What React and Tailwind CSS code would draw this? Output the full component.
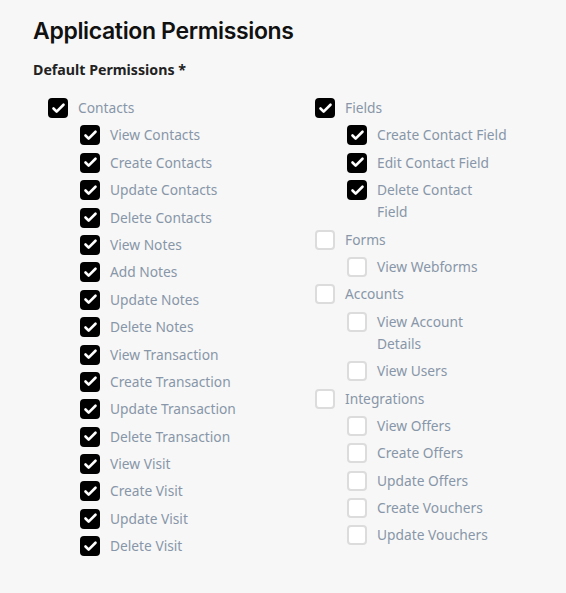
import { Check } from "lucide-react";

const left = {
  label: "Contacts",
  checked: true,
  children: [
    "View Contacts",
    "Create Contacts",
    "Update Contacts",
    "Delete Contacts",
    "View Notes",
    "Add Notes",
    "Update Notes",
    "Delete Notes",
    "View Transaction",
    "Create Transaction",
    "Update Transaction",
    "Delete Transaction",
    "View Visit",
    "Create Visit",
    "Update Visit",
    "Delete Visit",
  ],
};

// narrow: labels that wrap onto two lines in the right column
const right = [
  {
    label: "Fields",
    checked: true,
    children: ["Create Contact Field", "Edit Contact Field", { label: "Delete Contact Field", narrow: true }],
  },
  { label: "Forms", checked: false, children: ["View Webforms"] },
  {
    label: "Accounts",
    checked: false,
    children: [{ label: "View Account Details", narrow: true }, "View Users"],
  },
  {
    label: "Integrations",
    checked: false,
    children: ["View Offers", "Create Offers", "Update Offers", "Create Vouchers", "Update Vouchers"],
  },
];

const Box = ({ checked }) =>
  checked ? (
    <span className="mt-[1px] flex h-5 w-5 shrink-0 items-center justify-center rounded-[4px] bg-black">
      <Check size={15} strokeWidth={4.2} className="text-white" />
    </span>
  ) : (
    <span className="mt-[1px] h-5 w-5 shrink-0 rounded-[4px] border-2 border-[#dcdcdc] bg-white" />
  );

const Item = ({ label, checked, narrow }) => (
  <div className="mb-[5.4px] flex items-start gap-[10px]">
    <Box checked={checked} />
    <span className={(narrow ? "max-w-[100px] " : "") + "leading-[22px] text-[#8796a8]"}>{label}</span>
  </div>
);

const Group = ({ group }) => (
  <div>
    <Item label={group.label} checked={group.checked} />
    <div className="pl-[32px]">
      {group.children.map((c) => {
        const item = typeof c === "string" ? { label: c } : c;
        return <Item key={item.label} label={item.label} narrow={item.narrow} checked={group.checked} />;
      })}
    </div>
  </div>
);

export default function App() {
  return (
    <div className="min-h-screen bg-[#f7f7f7] px-[33px] pt-[17px] text-[13.75px] font-['Noto_Sans',sans-serif]">
      <h1 className="font-['Inter',sans-serif] text-[23px] font-semibold leading-[28px] tracking-[-0.35px] text-[#111]">
        Application Permissions
      </h1>
      <h2 className="mt-[14px] text-[14.2px] font-bold leading-[22px] text-[#222]">
        Default Permissions *
      </h2>
      <div className="mt-[16px] grid grid-cols-[267px_1fr] pl-[15px]">
        <Group group={left} />
        <div>
          {right.map((g) => (
            <Group key={g.label} group={g} />
          ))}
        </div>
      </div>
    </div>
  );
}
